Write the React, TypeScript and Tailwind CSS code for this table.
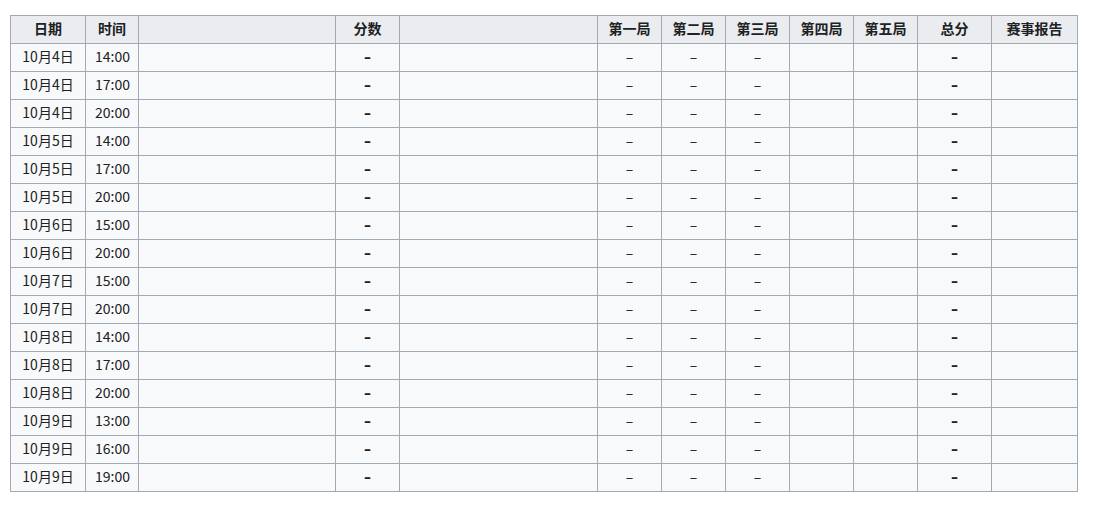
import React from "react";

const rows: [string, string][] = [
  ["10月4日", "14:00"],
  ["10月4日", "17:00"],
  ["10月4日", "20:00"],
  ["10月5日", "14:00"],
  ["10月5日", "17:00"],
  ["10月5日", "20:00"],
  ["10月6日", "15:00"],
  ["10月6日", "20:00"],
  ["10月7日", "15:00"],
  ["10月7日", "20:00"],
  ["10月8日", "14:00"],
  ["10月8日", "17:00"],
  ["10月8日", "20:00"],
  ["10月9日", "13:00"],
  ["10月9日", "16:00"],
  ["10月9日", "19:00"],
];

const widths = [75, 53, 197, 64, 198, 64, 64, 64, 64, 64, 74, 86];
const headers = ["日期", "时间", "", "分数", "", "第一局", "第二局", "第三局", "第四局", "第五局", "总分", "赛事报告"];

const cell = "border border-[#a2a9b1] h-[28px] p-0 pb-[3px] text-center align-middle";
// bold score dash looks heavier in the reference
const boldDash = "border border-[#a2a9b1] h-[28px] p-0 pb-[2px] text-center align-middle font-bold font-['DejaVu_Sans',sans-serif] text-[14px]";

export default function App() {
  return (
    <div className="bg-white w-[1106px] h-[507px] pt-[15px] pl-[10px] text-[#202122] text-[14px] leading-[20px]" style={{ fontFamily: '"Noto Sans CJK SC", "Noto Sans", sans-serif' }}>
      <table className="border-collapse table-fixed w-[1067px] bg-[#f8f9fa]">
        <colgroup>
          {widths.map((w, i) => (
            <col key={i} style={{ width: w }} />
          ))}
        </colgroup>
        <thead>
          <tr className="bg-[#eaecf0]">
            {headers.map((h, i) => (
              <th key={i} className={cell + " font-bold"}>{h}</th>
            ))}
          </tr>
        </thead>
        <tbody>
          {rows.map(([d, t], i) => (
            <tr key={i}>
              <td className={cell}>{d}</td>
              <td className={cell + " text-left pl-[9px]"}>{t}</td>
              <td className={cell}></td>
              <td className={boldDash}>–</td>
              <td className={cell}></td>
              <td className={cell}>–</td>
              <td className={cell}>–</td>
              <td className={cell}>–</td>
              <td className={cell}></td>
              <td className={cell}></td>
              <td className={boldDash}>–</td>
              <td className={cell}></td>
            </tr>
          ))}
        </tbody>
      </table>
    </div>
  );
}
